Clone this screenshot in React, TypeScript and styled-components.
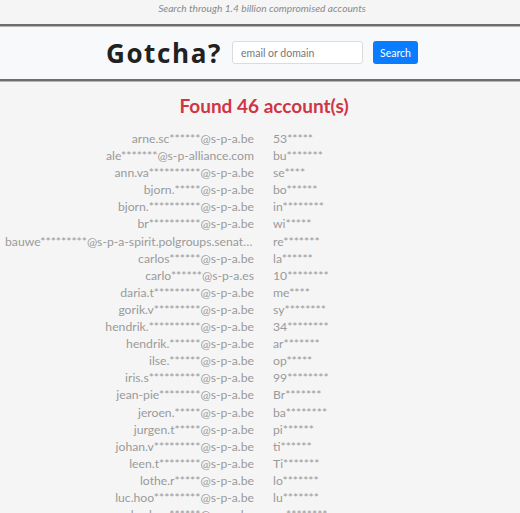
import React from 'react';
import styled, { createGlobalStyle } from 'styled-components';

const GlobalStyle = createGlobalStyle`
  html, body {
    margin: 0;
    padding: 0;
    background: #f5f5f5;
    font-family: Lato, "Open Sans", sans-serif;
  }
`;

const Page = styled.div`
  display: flex;
  flex-flow: column nowrap;
  width: 100%;
`;

const Tagline = styled.div`
  text-align: center;
  font-style: italic;
  font-size: 10.2px;
  color: #8a8a8a;
  height: 24px;
  line-height: 16px;
  padding-left: 4px;
`;

const Header = styled.header`
  background: #f8f9fb;
  border-top: 2px solid #6e6e6e;
  border-bottom: 2px solid #6e6e6e;
  box-shadow: 0 1px 0 #b5b5b5, inset 0 1px 0 #b5b5b5;
  height: 53px;
  display: flex;
  align-items: center;
  justify-content: center;
`;

const Logo = styled.h1`
  margin: 0 6px 0 0;
  width: 124px;
  font-family: "Open Sans", sans-serif;
  font-size: 26px;
  letter-spacing: 1.6px;
  font-weight: 700;
  color: #212121;
  text-align: center;
`;

const SearchInput = styled.input`
  box-sizing: border-box;
  width: 131px;
  height: 23px;
  border: 1px solid #dcdcdc;
  border-radius: 3px;
  background: #fff;
  padding: 0 8px;
  font-family: inherit;
  font-size: 10.5px;
  outline: 0;

  &::placeholder {
    color: #777;
  }
`;

const SearchButton = styled.button`
  box-sizing: border-box;
  margin-left: 10px;
  width: 45px;
  height: 23px;
  border: 0;
  border-radius: 3px;
  background: #0a7cff;
  color: #fff;
  font-family: inherit;
  font-size: 10.5px;
  cursor: pointer;
`;

const Title = styled.h2`
  margin: 13px 0 13px;
  text-align: center;
  font-size: 19px;
  font-weight: 700;
  color: #d03545;
  padding-left: 8px;
`;

const Results = styled.div`
  display: grid;
  grid-template-columns: 249px 1fr;
  column-gap: 19px;
  padding-left: 5px;
  font-size: 12.2px;
  line-height: 17.1px;
  color: #9a9a9a;
`;

const Email = styled.div`
  text-align: right;
  white-space: nowrap;
  overflow: hidden;
  text-overflow: ellipsis;
`;

const Password = styled.div`
  white-space: nowrap;
`;

const accounts: [string, string][] = [
  ['arne.sc******@s-p-a.be', '53*****'],
  ['ale*******@s-p-alliance.com', 'bu*******'],
  ['ann.va**********@s-p-a.be', 'se****'],
  ['bjorn.*****@s-p-a.be', 'bo******'],
  ['bjorn.**********@s-p-a.be', 'in********'],
  ['br**********@s-p-a.be', 'wi*****'],
  ['bauwe*********@s-p-a-spirit.polgroups.senate.be', 're*******'],
  ['carlos******@s-p-a.be', 'la******'],
  ['carlo******@s-p-a.es', '10********'],
  ['daria.t*********@s-p-a.be', 'me****'],
  ['gorik.v*********@s-p-a.be', 'sy********'],
  ['hendrik.**********@s-p-a.be', '34********'],
  ['hendrik.******@s-p-a.be', 'ar*******'],
  ['ilse.******@s-p-a.be', 'op*****'],
  ['iris.s**********@s-p-a.be', '99********'],
  ['jean-pie********@s-p-a.be', 'Br*******'],
  ['jeroen.*****@s-p-a.be', 'ba********'],
  ['jurgen.t*****@s-p-a.be', 'pi******'],
  ['johan.v*********@s-p-a.be', 'ti******'],
  ['leen.t********@s-p-a.be', 'Ti*******'],
  ['lothe.r*****@s-p-a.be', 'lo*******'],
  ['luc.hoo*********@s-p-a.be', 'lu*******'],
  ['luc.hoo******@s-p-a.be', 'vu********'],
];

export default function App() {
  return (
    <Page>
      <GlobalStyle />
      <Tagline>Search through 1.4 billion compromised accounts</Tagline>
      <Header>
        <Logo>Gotcha?</Logo>
        <SearchInput placeholder="email or domain" />
        <SearchButton>Search</SearchButton>
      </Header>
      <Title>Found 46 account(s)</Title>
      <Results>
        {accounts.map(([email, pass], i) => (
          <React.Fragment key={i}>
            <Email>{email}</Email>
            <Password>{pass}</Password>
          </React.Fragment>
        ))}
      </Results>
    </Page>
  );
}
